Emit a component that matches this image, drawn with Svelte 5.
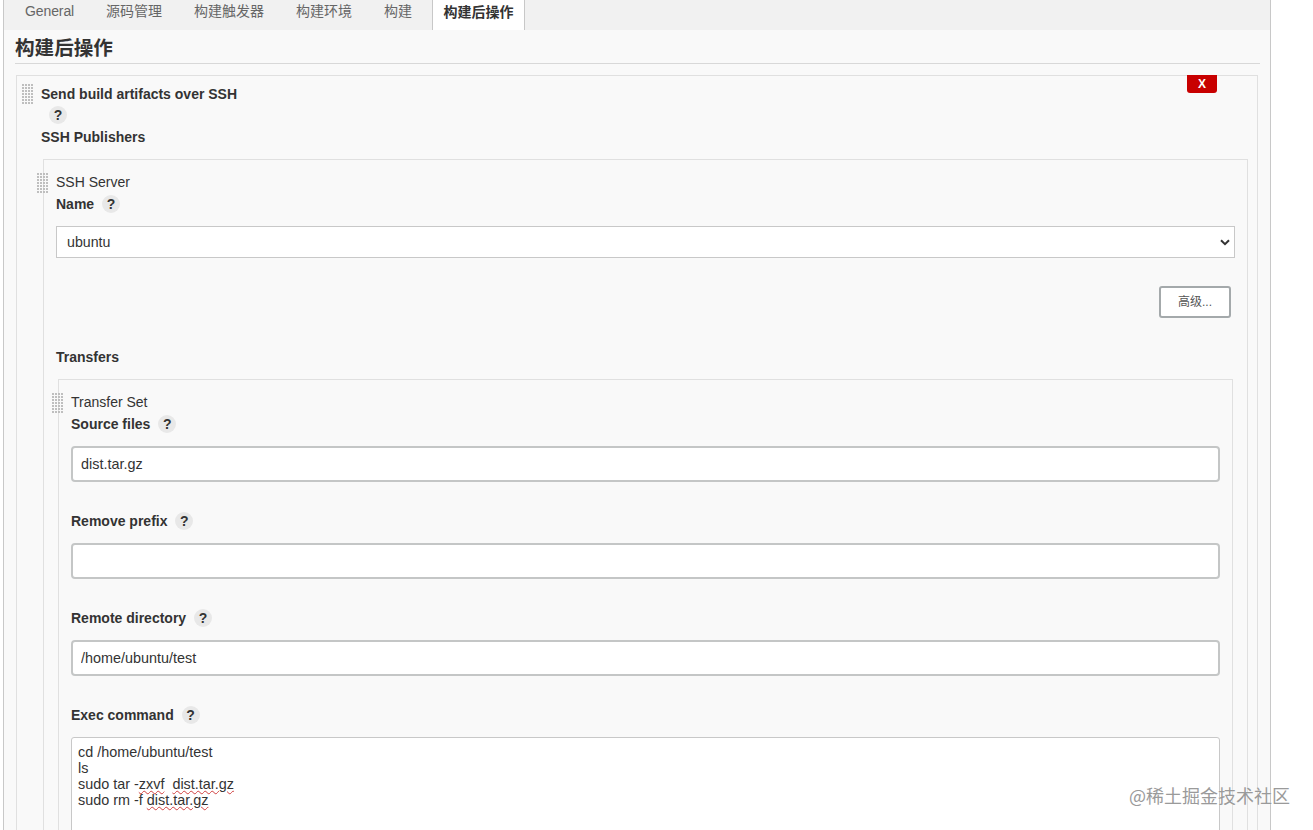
<script>
	const tabs = ["General", "源码管理", "构建触发器", "构建环境", "构建", "构建后操作"];
	const fields = [
		{ label: "Source files", value: "dist.tar.gz" },
		{ label: "Remove prefix", value: "" },
		{ label: "Remote directory", value: "/home/ubuntu/test" }
	];
</script>

{#snippet help()}
	<span class="help">?</span>
{/snippet}

<div class="page">
	<div class="tabs">
		{#each tabs as tab, i}
			<span class="tab" class:active={i === tabs.length - 1}>{tab}</span>
		{/each}
	</div>

	<h2 class="section">构建后操作</h2>

	<div class="panel outer">
		<span class="grip"></span>
		<button class="delete" type="button">X</button>
		<div class="strong title">Send build artifacts over SSH</div>
		<div class="helprow">{@render help()}</div>
		<div class="strong publishers">SSH Publishers</div>

		<div class="panel server">
			<span class="grip"></span>
			<div class="plain">SSH Server</div>
			<div class="strong label first">Name {@render help()}</div>
			<div class="selectwrap">
				<select class="select">
					<option>ubuntu</option>
				</select>
				<svg class="chevron" width="10" height="7" viewBox="0 0 10 7">
					<path d="M1 1.2 5 5.2 9 1.2" fill="none" stroke="#333" stroke-width="2" />
				</svg>
			</div>
			<div class="actions">
				<button class="advanced" type="button">高级...</button>
			</div>
			<div class="strong transfers">Transfers</div>

			<div class="panel transfer">
				<span class="grip"></span>
				<div class="plain">Transfer Set</div>
				{#each fields as field, i}
					<div class="strong label" class:first={i === 0}>{field.label} {@render help()}</div>
					<input class="text" type="text" value={field.value} />
				{/each}
				<div class="strong label">Exec command {@render help()}</div>
				<div class="command">
					<div>cd /home/ubuntu/test</div>
					<div>ls</div>
					<div>sudo tar -<span class="typo">zxvf</span>&nbsp; <span class="typo">dist.tar.gz</span></div>
					<div>sudo rm -f <span class="typo">dist.tar.gz</span></div>
				</div>
			</div>
		</div>
	</div>
</div>

<div class="watermark">@稀土掘金技术社区</div>

<style>
	:global(body) {
		background: #fff;
		overflow: hidden;
	}
	.page {
		box-sizing: border-box;
		width: 1268px;
		height: 830px;
		margin-left: 3px;
		overflow: hidden;
		border-left: 1px solid #c8c8c8;
		border-right: 1px solid #c8c8c8;
		background: #f9f9f9;
		color: #333;
		font-family: "Liberation Sans", "Noto Sans CJK SC", sans-serif;
		font-size: 14px;
	}
	.tabs {
		display: flex;
		gap: 10px;
		height: 30px;
		padding-left: 10px;
		background: #f1f1f1;
	}
	.tab {
		padding: 0 11px;
		line-height: 23px;
		color: #666;
	}
	.tab:first-child {
		letter-spacing: -0.1px;
	}
	.tab.active {
		margin-left: -1px;
		padding: 0 10.5px;
		border-left: 1px solid #c8c8c8;
		border-right: 1px solid #c8c8c8;
		background: #fff;
		line-height: 25px;
		color: #333;
		font-weight: 600;
	}
	.section {
		margin: 0 10px 0 11px;
		padding: 4px 0 1px;
		border-bottom: 1px solid #d8d8d8;
		font-size: 19.6px;
		font-weight: 600;
		line-height: 28px;
	}
	.panel {
		position: relative;
		box-sizing: border-box;
		border: 1px solid #e0e0e0;
	}
	.outer {
		margin: 11px 12px 0;
		padding: 8px 9px 0 24px;
	}
	.server {
		margin: 12px 0 0 2px;
		padding: 13px 12px 0;
	}
	.transfer {
		margin: 12px 2px 0;
		padding: 13px 12px 0;
	}
	.grip {
		position: absolute;
		left: -7px;
		top: 13px;
		width: 12px;
		height: 21px;
		background-image: radial-gradient(circle at 1px 1px, #bdbdbd 0.7px, transparent 1px);
		background-size: 3px 3px;
	}
	.outer > .grip {
		left: 5px;
		top: 8px;
	}
	.delete {
		position: absolute;
		top: -1px;
		right: 40px;
		width: 30px;
		height: 18px;
		padding: 0;
		border: 0;
		border-radius: 0 0 3px 3px;
		background: #c80000;
		color: #fff;
		font: bold 12px "Liberation Sans", sans-serif;
	}
	.strong {
		font-weight: bold;
		line-height: 20px;
	}
	.plain {
		line-height: 18px;
	}
	.helprow {
		height: 20px;
		margin-top: 1px;
		padding-left: 8px;
	}
	.publishers {
		margin-top: 2px;
	}
	.help {
		display: inline-block;
		width: 18px;
		height: 18px;
		margin: 1px 0 0 4px;
		border-radius: 50%;
		background: #e8e8e8;
		font-weight: bold;
		line-height: 18px;
		text-align: center;
		vertical-align: top;
	}
	.helprow .help {
		margin-left: 0;
	}
	.label {
		margin-top: 29px;
	}
	.label.first {
		margin-top: 3px;
	}
	.selectwrap {
		position: relative;
		margin-top: 12px;
	}
	.select {
		display: block;
		box-sizing: border-box;
		width: 100%;
		height: 32px;
		padding: 0 10px;
		border: 1px solid #c8c8c8;
		border-radius: 0;
		appearance: none;
		background: #fff;
		color: #333;
		font: 14.2px "Liberation Sans", sans-serif;
	}
	.chevron {
		position: absolute;
		right: 5px;
		top: 13px;
	}
	.actions {
		display: flex;
		justify-content: flex-end;
		margin: 28px 4px 0 0;
	}
	.advanced {
		box-sizing: border-box;
		width: 72px;
		height: 32px;
		padding: 0 0 3px;
		border: 2px solid #a4a9ab;
		border-radius: 3px;
		background: #fff;
		color: #555;
		font: 12px "Liberation Sans", "Noto Sans CJK SC", sans-serif;
	}
	.transfers {
		margin-top: 29px;
	}
	.text {
		display: block;
		box-sizing: border-box;
		width: 100%;
		height: 36px;
		margin-top: 12px;
		padding: 0 8px;
		border: 2px solid #c4c6c6;
		border-radius: 4px;
		background: #fff;
		color: #333;
		font: 14.4px "Liberation Sans", sans-serif;
	}
	.command {
		box-sizing: border-box;
		height: 200px;
		margin-top: 12px;
		padding: 6px 6px;
		border: 1px solid #c8c8c8;
		border-radius: 3px;
		background: #fff;
		font-size: 14.4px;
		line-height: 16px;
	}
	.typo {
		text-decoration: underline wavy #d04040 1px;
		text-underline-offset: 1px;
	}
	.watermark {
		position: absolute;
		left: 1129px;
		top: 783px;
		color: #9a9a9a;
		font-family: "Noto Sans CJK SC", sans-serif;
		font-size: 18px;
		line-height: 24px;
		white-space: nowrap;
		text-shadow: 0 0 1px #fff;
	}
</style>
